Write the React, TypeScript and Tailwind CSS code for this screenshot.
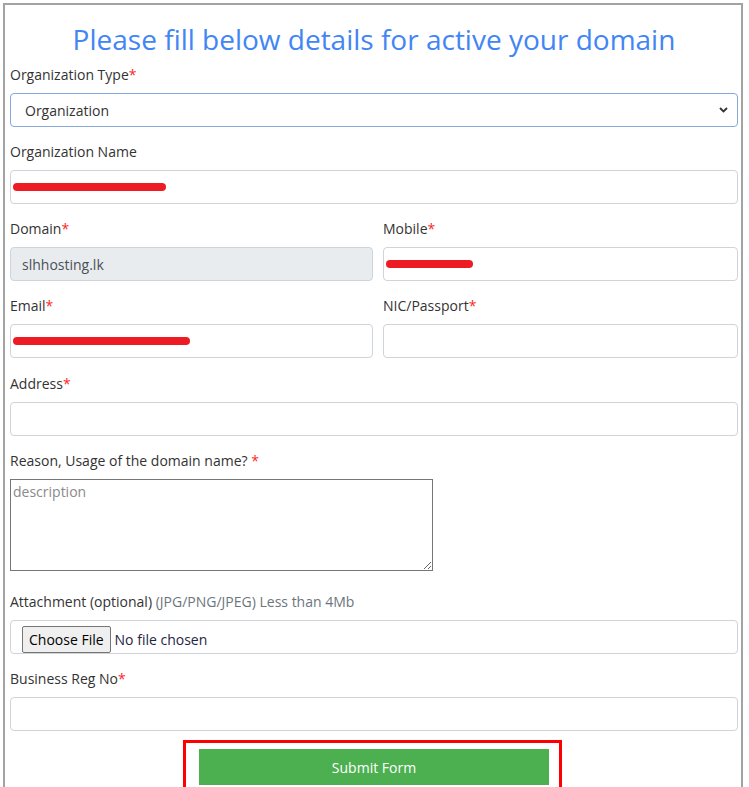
import type { ReactNode } from "react";

function Label({ children, required = false }: { children: ReactNode; required?: boolean }) {
  return (
    <label className="mb-2 block text-[14px] leading-[21px] text-[#333]">
      {children}
      {required && <span className="text-[#ff1f1f]">*</span>}
    </label>
  );
}

function Box({ children, bg = "bg-white" }: { children?: ReactNode; bg?: string }) {
  return (
    <div
      className={`flex h-[34px] items-center rounded-[4px] border border-[#ced4da] px-[11px] text-[14px] text-[#495057] ${bg}`}
    >
      {children}
    </div>
  );
}

function Scribble({ width }: { width: number }) {
  return (
    <span
      className="block h-[8px] -ml-[9px] rounded-full bg-[#ed1c24]"
      style={{ width }}
    />
  );
}

export default function App() {
  return (
    <div className="bg-white pl-[3px] pr-[6px] pt-[3px] font-['Open_Sans',sans-serif]">
      <div className="border-2 border-[#a3a3a3] pb-[60px] pl-[5px] pr-[3px] pt-[15px]">
        <h1 className="text-center text-[28px] font-medium leading-[38px] text-[#4285f4]">
          Please fill below details for active your domain
        </h1>

        <div className="mt-[6px]">
          <Label required>Organization Type</Label>
          <div className="flex h-[34px] items-center justify-between rounded-[4px] border border-[#84a9da] bg-white pl-[14px] pr-[9px] text-[14px] text-[#333]">
            <span>Organization</span>
            <svg width="9" height="6" viewBox="0 0 9 6" fill="none">
              <path d="M1 1l3.5 3.5L8 1" stroke="#333" strokeWidth="1.8" />
            </svg>
          </div>
        </div>

        <div className="mt-[14px]">
          <Label>Organization Name</Label>
          <Box>
            <Scribble width={153} />
          </Box>
        </div>

        <div className="mt-[14px] grid grid-cols-[363px_1fr] gap-x-[10px]">
          <div>
            <Label required>Domain</Label>
            <Box bg="bg-[#e9ecef]">slhhosting.lk</Box>
          </div>
          <div>
            <Label required>Mobile</Label>
            <Box>
              <Scribble width={87} />
            </Box>
          </div>
          <div className="mt-[14px]">
            <Label required>Email</Label>
            <Box>
              <Scribble width={177} />
            </Box>
          </div>
          <div className="mt-[14px]">
            <Label required>NIC/Passport</Label>
            <Box />
          </div>
        </div>

        <div className="mt-[15px]">
          <Label required>Address</Label>
          <Box />
        </div>

        <div className="mt-[14px]">
          <label className="mb-2 block text-[14px] leading-[21px] text-[#333]">
            Reason, Usage of the domain name? <span className="text-[#ff1f1f]">*</span>
          </label>
          <textarea
            placeholder="description"
            className="block h-[92px] w-[423px] border border-[#767676] p-[2px] text-[14px] leading-[19px] text-[#333] outline-none placeholder:text-[#8a8a8a]"
          />
        </div>

        <div className="mt-[20px]">
          <label className="mb-2 block text-[14px] leading-[21px] text-[#333]">
            Attachment (optional) <span className="text-[#6c757d]">(JPG/PNG/JPEG) Less than 4Mb</span>
          </label>
          <div className="h-[34px] rounded-[4px] border border-[#ced4da] bg-white pl-[11px] pt-[5px]">
            <div className="flex items-center text-[14px]">
              <span className="flex h-[27px] items-center rounded-[2px] border border-[#767676] bg-[#efefef] px-[6px] text-[#000]">
                Choose File
              </span>
              <span className="ml-[4px] text-[#1f2540]">No file chosen</span>
            </div>
          </div>
        </div>

        <div className="mt-[14px]">
          <Label required>Business Reg No</Label>
          <Box />
        </div>

        <div className="ml-[173px] mt-[9px] w-[379px] border-[3px] border-[#ff0000] pb-[10px] pl-[13px] pr-[10px] pt-[6px]">
          <button className="flex h-[36px] w-[350px] items-center justify-center bg-[#4caf50] text-[14px] text-white">
            Submit Form
          </button>
        </div>
      </div>
    </div>
  );
}
